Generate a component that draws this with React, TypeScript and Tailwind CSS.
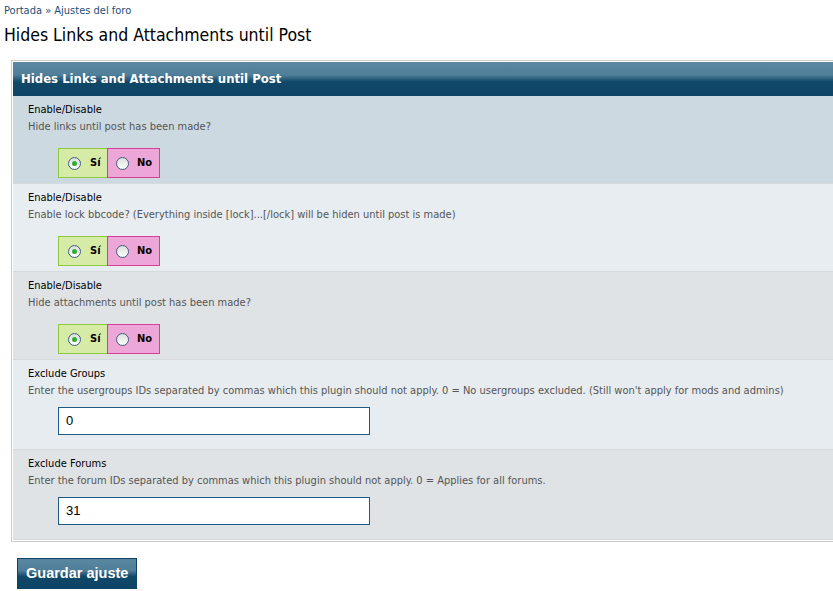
import React from "react";

const font = "font-['Tahoma','DejaVu_Sans_Condensed','DejaVu_Sans',sans-serif]";

const Radio = ({ checked }: { checked: boolean }) => (
  <span className="flex h-[13px] w-[13px] items-center justify-center rounded-full border border-[#3f5f7f] bg-[linear-gradient(#dcdcdc,#ffffff)]">
    {checked && <span className="h-[5px] w-[5px] rounded-full bg-[#2fae2f]" />}
  </span>
);

const YesNo = () => (
  <div className="mt-[14px] ml-[30px] flex h-[30px] text-[11px] font-bold text-black">
    <div className="flex w-[49px] items-center gap-[9px] border border-r-0 border-[#8fc944] bg-[#d6eba6] pl-[9px]">
      <Radio checked />
      <span>Sí</span>
    </div>
    <div className="flex w-[53px] items-center gap-[8px] border border-[#d63f97] bg-[#eca6d7] pl-[8px]">
      <Radio checked={false} />
      <span>No</span>
    </div>
  </div>
);

const Row = ({
  title,
  desc,
  bg,
  children,
}: {
  title: string;
  desc: string;
  bg: string;
  children: React.ReactNode;
}) => (
  <div className={`border-b border-[#d5dadd] pl-[15px] pt-[7px] pb-[5px] ${bg}`}>
    <div className="text-[11px] leading-[14px] text-black">{title}</div>
    <div className="mt-[3px] text-[11px] leading-[14px] text-[#555]">{desc}</div>
    {children}
  </div>
);

const TextField = ({ value }: { value: string }) => (
  <div className="mt-[9px] ml-[30px] flex h-[28px] w-[312px] items-center border border-[#1d5a84] bg-white pl-[7px] font-['Liberation_Sans',Arial,sans-serif] text-[13px] text-black">
    {value}
  </div>
);

export default function App() {
  return (
    <div className={`w-full overflow-hidden bg-white ${font}`}>
      <div className="px-[4px] pt-[4px] text-[11px] leading-[14px] text-[#1d4f7a]">
        Portada » Ajustes del foro
      </div>
      <h1 className="px-[4px] pt-[6px] text-[17.5px] leading-[22px] text-black">
        Hides Links and Attachments until Post
      </h1>
      <div className="mt-[14px] ml-[11px] w-[860px] border border-[#cccccc] bg-white p-px">
        <div className="flex h-[34px] items-center bg-[linear-gradient(#5b87a1_0%,#507f99_38%,#104868_58%,#0e4466_100%)] pl-[8px] text-[13px] font-bold text-white">
          Hides Links and Attachments until Post
        </div>
        <Row title="Enable/Disable" desc="Hide links until post has been made?" bg="bg-[#ccd9e1]">
          <YesNo />
        </Row>
        <Row
          title="Enable/Disable"
          desc="Enable lock bbcode? (Everything inside [lock]...[/lock] will be hiden until post is made)"
          bg="bg-[#e8edf1]"
        >
          <YesNo />
        </Row>
        <Row title="Enable/Disable" desc="Hide attachments until post has been made?" bg="bg-[#dfe3e6]">
          <YesNo />
        </Row>
        <Row
          title="Exclude Groups"
          desc="Enter the usergroups IDs separated by commas which this plugin should not apply. 0 = No usergroups excluded. (Still won't apply for mods and admins)"
          bg="bg-[#e7ecf0]"
        >
          <div className="pb-[9px]">
            <TextField value="0" />
          </div>
        </Row>
        <Row
          title="Exclude Forums"
          desc="Enter the forum IDs separated by commas which this plugin should not apply. 0 = Applies for all forums."
          bg="bg-[#dfe3e6]"
        >
          <div className="pb-[9px]">
            <TextField value="31" />
          </div>
        </Row>
      </div>
      <div className="px-[17px] pt-[16px] pb-[3px]">
        <button className="h-[31px] border border-[#0e4566] bg-[linear-gradient(#5b87a1_0%,#4f7e98_40%,#104868_60%,#0e4466_100%)] px-[8px] font-['Liberation_Sans',Arial,sans-serif] text-[14.5px] font-bold text-white">
          Guardar ajuste
        </button>
      </div>
    </div>
  );
}
